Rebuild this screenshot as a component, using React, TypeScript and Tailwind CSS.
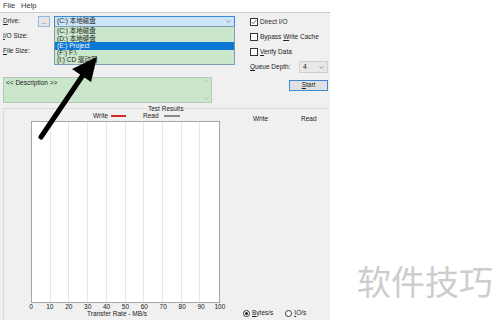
const font = { fontFamily: '"Liberation Sans", Arial, "Noto Sans CJK SC", sans-serif' }

const DRIVES = ['(C:) 本地磁盘', '(D:) 本地硬盘', '(E:) Project', '(F:) F:\\', '(I:) CD 驱动器']
const TICKS = [0, 10, 20, 30, 40, 50, 60, 70, 80, 90, 100]

const Check = ({ checked, children }: { checked?: boolean; children: React.ReactNode }) => (
  <div className="h-[10px] flex items-center gap-[2px]">
    <span className="w-[8px] h-[8px] bg-white border border-[#333] flex items-center justify-center">
      {checked && (
        <svg viewBox="0 0 8 8" className="w-[6px] h-[6px]">
          <path d="M1 4.2 L3 6.2 L7 1.5" fill="none" stroke="#222" strokeWidth="0.9" />
        </svg>
      )}
    </span>
    <span>{children}</span>
  </div>
)

const Chevron = ({ up }: { up?: boolean }) => (
  <svg viewBox="0 0 8 5" className={`w-[5px] h-[3px] ${up ? 'rotate-180' : ''}`}>
    <path d="M0.5 0.5 L4 4 L7.5 0.5" fill="none" stroke={up === undefined ? '#555' : '#999'} strokeWidth="0.9" />
  </svg>
)

export default function App() {
  return (
    <div className="w-[500px] h-[320px] bg-white flex flex-col overflow-hidden relative text-[6.5px] text-[#222] leading-none" style={font}>
      {/* Menu bar */}
      <div className="h-[12px] flex items-center gap-[6px] pl-[3px] text-[7.5px] font-normal text-[#333]">
        <span>File</span>
        <span>Help</span>
      </div>

      <div className="flex flex-1">
        {/* Dialog panel */}
        <div className="w-[330px] bg-[#f0f0f0] border-t border-[#c9c9c9] flex flex-col">
          <div className="h-[95px] flex">
            {/* Left controls */}
            <div className="w-[247px] pt-[3px] flex flex-col">
              <div className="h-[11px] flex items-center">
                <span className="w-[38px] pl-[3px]"><u>D</u>rive:</span>
                <span className="w-[12px] h-[11px] bg-[#e5e5e5] border border-[#8fb8e0] flex items-center justify-center text-[6px]">...</span>
                <div className="ml-[4px] w-[181px] h-[11px] relative bg-[#cce4f7] border border-[#3c8ad6] flex items-center justify-between pl-[2px] pr-[3px]">
                  <span>(C:) 本地磁盘</span>
                  <Chevron />
                  <div className="absolute left-[-1px] right-[-1px] top-full h-[39px] bg-[#cbe7cb] border border-[#7f9db9] flex flex-col pt-[1px] z-10">
                    {DRIVES.map((d, i) => (
                      <div
                        key={d}
                        className={`h-[7.5px] flex items-center pl-[2px] ${i === 2 ? 'bg-[#0a78d4] text-white' : ''}`}
                      >
                        {d}
                      </div>
                    ))}
                  </div>
                </div>
              </div>
              <div className="h-[11px] mt-[4px] flex items-center pl-[3px]"><u>I</u>/O Size:</div>
              <div className="h-[11px] mt-[4px] flex items-center pl-[3px]"><u>F</u>ile Size:</div>
              <div className="mt-[20px] ml-[3px] w-[209px] h-[26px] bg-[#cbe7cb] border border-[#b4c8b4] flex">
                <div className="flex-1 pl-[2px] pt-[2px]">&lt;&lt; Description &gt;&gt;</div>
                <div className="w-[10px] flex flex-col justify-between items-center py-[2px]">
                  <Chevron up />
                  <Chevron up={false} />
                </div>
              </div>
            </div>

            {/* Right options */}
            <div className="flex-1 pl-[3px] pr-[2px] pt-[4px] flex flex-col">
              <div className="flex flex-col gap-[5px]">
                <Check checked>Direct I/O</Check>
                <Check>Bypass <u>W</u>rite Cache</Check>
                <Check><u>V</u>erify Data</Check>
              </div>
              <div className="mt-[4px] h-[12px] flex items-center justify-between">
                <span><u>Q</u>ueue Depth:</span>
                <span className="w-[29px] h-[12px] bg-[#e8e8e8] border border-[#cfcfcf] flex items-center justify-between pl-[3px] pr-[3px]">
                  <span>4</span>
                  <Chevron />
                </span>
              </div>
              <div className="mt-[7px] flex justify-end">
                <span className="w-[39px] h-[11px] bg-[#e1e1e1] border border-[#3c8ad6] flex items-center justify-center">
                  <u>S</u>tart
                </span>
              </div>
            </div>
          </div>

          {/* Test results group */}
          <div className="flex-1 ml-[3px] mr-[2px] border-t border-l border-[#dadada] flex">
            <div className="w-[231px] flex flex-col">
              <div className="h-[6px] -mt-[3px] flex items-center pl-[144px]">
                <span className="bg-[#f0f0f0]">Test Results</span>
              </div>
              <div className="h-[8px] flex items-center pl-[89px]">
                <span>Write</span>
                <span className="ml-[3px] w-[15px] h-[2px] bg-[#d42a2a]" />
                <span className="ml-[17px]">Read</span>
                <span className="ml-[5px] w-[16px] h-[2px] bg-[#8a8a8a]" />
              </div>
              <div className="mt-[1px] ml-[27px] w-[189px] h-[182px] bg-white border border-[#a6a6a6] grid grid-cols-10">
                {TICKS.slice(1).map((t) => (
                  <div key={t} className={t === 100 ? '' : 'border-r border-[#e6e6e6]'} />
                ))}
              </div>
              <div className="mt-[1px] ml-[17.5px] w-[207.9px] grid grid-cols-11 h-[7px] items-center text-center">
                {TICKS.map((t) => (
                  <span key={t}>{t}</span>
                ))}
              </div>
              <div className="h-[7px] flex items-center pl-[83px]">Transfer Rate - MB/s</div>
            </div>

            <div className="flex-1 flex flex-col justify-between pt-[7px] pb-[3px]">
              <div className="h-[7px] flex items-center pl-[18px]">
                <span>Write</span>
                <span className="ml-[33px]">Read</span>
              </div>
              <div className="h-[8px] flex items-center pl-[8px]">
                <span className="w-[7px] h-[7px] rounded-full border border-[#333] bg-white flex items-center justify-center">
                  <span className="w-[3px] h-[3px] rounded-full bg-[#222]" />
                </span>
                <span className="ml-[2px]"><u>B</u>ytes/s</span>
                <span className="ml-[12px] w-[7px] h-[7px] rounded-full border border-[#333] bg-white" />
                <span className="ml-[2px]"><u>I</u>O/s</span>
              </div>
            </div>
          </div>
        </div>

        {/* Right white area with watermark */}
        <div className="flex-1 flex flex-col justify-end pb-[22px] pl-[27px]">
          <span className="text-[34px] leading-none text-[#cdcdcd]" style={{ fontFamily: '"Noto Sans CJK SC", sans-serif' }}>
            软件技巧
          </span>
        </div>
      </div>

      {/* Annotation arrow */}
      <svg className="absolute inset-0 pointer-events-none z-20" width="500" height="320" viewBox="0 0 500 320">
        <line x1="41" y1="137" x2="83" y2="75" stroke="#000" strokeWidth="5" strokeLinecap="round" />
        <polygon points="97,57 72,69 91,82" fill="#000" />
      </svg>
    </div>
  )
}
